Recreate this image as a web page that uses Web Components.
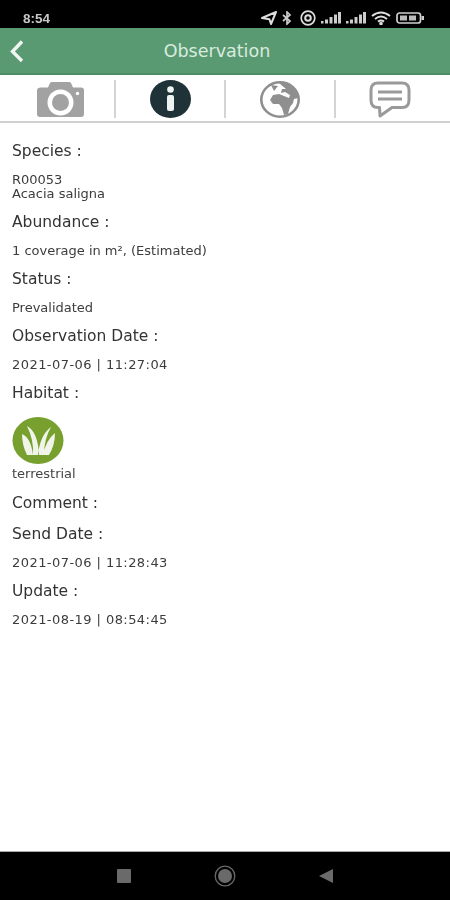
<!DOCTYPE html>
<html>
<head>
<meta charset="utf-8">
<title>Observation</title>
<style>
    html,body{margin:0;height:100%;background:#fff;}
    body{font-family:"DejaVu Sans",Verdana,sans-serif;}
    obs-screen{height:900px;}
</style>
</head>
<body>
<obs-screen>
    <status-bar slot="top" time="8:54"></status-bar>
    <app-bar slot="top" title="Observation"></app-bar>
    <tab-bar slot="top"></tab-bar>

    <obs-field label="Species :"><div>R00053</div><div>Acacia saligna</div></obs-field>
    <obs-field label="Abundance :">1 coverage in m², (Estimated)</obs-field>
    <obs-field label="Status :">Prevalidated</obs-field>
    <obs-field label="Observation Date :" class="date">2021-07-06 | 11:27:04</obs-field>
    <obs-field label="Habitat :" class="no-value"></obs-field>
    <habitat-badge name="terrestrial"></habitat-badge>
    <obs-field label="Comment :" class="no-value comment"></obs-field>
    <obs-field label="Send Date :" class="date">2021-07-06 | 11:28:43</obs-field>
    <obs-field label="Update :" class="date">2021-08-19 | 08:54:45</obs-field>

    <nav-bar slot="bottom"></nav-bar>
</obs-screen>

<script>
class ObsScreen extends HTMLElement{
    constructor(){
        super();
        this.attachShadow({mode:'open'});
        this.shadowRoot.innerHTML = `
            <style>
                :host{display:flex;flex-direction:column;width:450px;overflow:hidden;filter:blur(.6px);}
                main{flex:1;padding:14px 12px 0;display:flex;flex-direction:column;}
            </style>
            <slot name="top"></slot>
            <main><slot></slot></main>
            <slot name="bottom"></slot>
        `;
    }
}

class StatusBar extends HTMLElement{
    constructor(){
        super();
        this.attachShadow({mode:'open'});
        this.shadowRoot.innerHTML = `
            <style>
                :host{display:flex;align-items:center;justify-content:space-between;height:28px;background:#000;color:#c8c8c8;padding:0 26px 0 23px;box-sizing:border-box;}
                span{font:bold 13.500px "Liberation Sans",sans-serif;position:relative;top:4px;}
                .icons{display:flex;align-items:center;gap:5px;position:relative;top:4px;}
                svg{display:block;}
            </style>
            <span>${this.getAttribute('time')}</span>
            <div class="icons">
                <svg width="16" height="14" viewBox="0 0 16 14"><path d="M1 7 15 1 10 13 8.400 8.300z" fill="none" stroke="#ddd" stroke-width="2" stroke-linejoin="round"/></svg>
                <svg width="10" height="14" viewBox="0 0 10 14"><path d="M1 4 8 10 5 13V1L8 4 1 10" fill="none" stroke="#ccc" stroke-width="1.700"/></svg>
                <svg width="16" height="16" viewBox="0 0 16 16" fill="none" stroke="#ddd" style="margin-left:3px"><circle cx="8" cy="8" r="6.800" stroke-width="1.700"/><circle cx="8" cy="8" r="2.800" stroke-width="2"/></svg>
                <svg width="20" height="12" viewBox="0 0 20 12" fill="#ccc"><rect x="0" y="9" width="2.500" height="2.500"/><rect x="4" y="7.500" width="3" height="4"/><rect x="8.500" y="5" width="3" height="6.500"/><rect x="13" y="2.500" width="3" height="9"/><rect x="17" y="0" width="3" height="11.500"/></svg>
                <svg width="20" height="12" viewBox="0 0 20 12" fill="#ccc"><rect x="0" y="9" width="2.500" height="2.500"/><rect x="4" y="7.500" width="3" height="4"/><rect x="8.500" y="5" width="3" height="6.500"/><rect x="13" y="2.500" width="3" height="9"/><rect x="17" y="0" width="3" height="11.500"/></svg>
                <svg width="20" height="14" viewBox="0 0 20 14" fill="none" stroke="#ddd" stroke-width="2"><path d="M1 5Q10-2 19 5"/><path d="M4 8Q10 3 16 8"/><path d="M7 10.600Q10 8.500 13 10.600"/><circle cx="10" cy="12.500" r=".8" fill="#ddd"/></svg>
                <svg width="28" height="12" viewBox="0 0 28 12"><rect x="1" y="1" width="23.500" height="10" rx="2.500" fill="none" stroke="#d0d0d0" stroke-width="1.700"/><rect x="25.500" y="4" width="2.500" height="4" fill="#d0d0d0"/><rect x="4" y="3.500" width="7" height="5" fill="#bbb"/><rect x="13" y="3.500" width="7" height="5" fill="#bbb"/></svg>
            </div>
        `;
    }
}

class AppBar extends HTMLElement{
    constructor(){
        super();
        this.attachShadow({mode:'open'});
        this.shadowRoot.innerHTML = `
            <style>
                :host{display:flex;align-items:center;justify-content:center;position:relative;height:47px;box-sizing:border-box;background:#5a9a72;border-bottom:2px solid #4d8c65;color:#d9ebdf;font-size:17.500px;padding-right:16px;}
                svg{position:absolute;left:9px;top:11px;}
            </style>
            <svg width="16" height="24" viewBox="0 0 16 24"><path d="M13 2.500 3.500 12.500 13 22" fill="none" stroke="#f0f6f2" stroke-width="3.400"/></svg>
            <span>${this.getAttribute('title')}</span>
        `;
    }
}

class TabBar extends HTMLElement{
    constructor(){
        super();
        this.attachShadow({mode:'open'});
        this.shadowRoot.innerHTML = `
            <style>
                :host{display:grid;grid-template-columns:116px 110px 110px 114px;height:48px;box-sizing:border-box;border-bottom:2px solid #d0d0d0;background:#fff;}
                div{display:flex;align-items:center;justify-content:center;border-right:2px solid #d4d4d4;margin:5px 0 3px;}
                div:first-of-type{padding-left:6px;}
                div:last-of-type{border-right:0;padding-right:6px;}
                svg{display:block;}
            </style>
            <div>
                <svg width="47" height="36" viewBox="0 0 47 36"><path d="M4 6.500H11L13 2Q13.500 1 15 1H32Q33.500 1 34 2L36 6.500H44Q47 6.500 47 9.500V33Q47 36 44 36H3Q0 36 0 33V9.500Q0 6.500 4 6.500Z" fill="#a2a2a2"/><circle cx="23.500" cy="21.500" r="13" fill="#fff"/><circle cx="23.500" cy="21.500" r="8.500" fill="#a2a2a2"/><circle cx="40.500" cy="12.500" r="1.700" fill="#fff"/></svg>
            </div>
            <div>
                <svg width="41" height="38" viewBox="0 0 41 38"><ellipse cx="20.500" cy="19" rx="20.500" ry="19" fill="#1f3238"/><circle cx="20.500" cy="9.500" r="3.300" fill="#eef2f2"/><rect x="17" y="15" width="7" height="16" rx="2" fill="#eef2f2"/></svg>
            </div>
            <div>
                <svg width="40" height="37" viewBox="0 0 40 37"><ellipse cx="20" cy="18.500" rx="18.700" ry="17.200" fill="#fff" stroke="#8f8f8f" stroke-width="2.600"/><path d="M19 2C28 0 36 7 38.500 17L34 18 33 22 30 26 28 33 24 34 22 27 19 23 13 23 10 19 13 14 19 13 24 15 29 17 30 14 25 11 21 12 22 8 26 8Z" fill="#8f8f8f"/><path d="M11 4 18 5 14 10Z" fill="#8f8f8f"/></svg>
            </div>
            <div>
                <svg width="42" height="37" viewBox="0 0 42 37"><path d="M9 2H33Q40 2 40 9V19Q40 26.500 33 26.500H23L11 35 10.500 26.500H9Q2 26.500 2 19V9Q2 2 9 2Z" fill="#fff" stroke="#9a9a9a" stroke-width="3" stroke-linejoin="round"/><path d="M9 11H33M9 18H33" stroke="#9a9a9a" stroke-width="3"/></svg>
            </div>
        `;
    }
}

class ObsField extends HTMLElement{
    constructor(){
        super();
        this.attachShadow({mode:'open'});
        this.shadowRoot.innerHTML = `
            <style>
                :host{display:block;}
                .label{font-size:15.500px;line-height:28px;color:#333;}
                .value{font-size:13px;line-height:14px;padding:7.500px 0;color:#3c3c3c;}
                :host(.date) .value{letter-spacing:.44px;}
                :host(.no-value) .value{display:none;}
                :host(.comment){padding-bottom:3px;}
            </style>
            <div class="label">${this.getAttribute('label')}</div>
            <div class="value"><slot></slot></div>
        `;
    }
}

class HabitatBadge extends HTMLElement{
    constructor(){
        super();
        this.attachShadow({mode:'open'});
        this.shadowRoot.innerHTML = `
            <style>
                :host{display:flex;flex-direction:column;align-items:flex-start;padding-top:10px;}
                svg{display:block;}
                span{font-size:13px;line-height:14px;margin-top:3px;margin-bottom:8px;color:#444;}
            </style>
            <svg width="52" height="47" viewBox="0 0 52 47"><ellipse cx="26" cy="23.500" rx="25.500" ry="23.500" fill="#77a02f"/><path d="M10 17Q19 21 21 38H15Q10 28 10 17ZM15 9Q26 15 27 38H21Q22 23 15 9ZM39 10Q28 18 26 38H32Q32 22 39 10ZM43 16Q34 23 31 38H37Q43 28 43 16Z" fill="#f1f4e8"/></svg>
            <span>${this.getAttribute('name')}</span>
        `;
    }
}

class NavBar extends HTMLElement{
    constructor(){
        super();
        this.attachShadow({mode:'open'});
        this.shadowRoot.innerHTML = `
            <style>
                :host{display:grid;grid-template-columns:repeat(3,101px);justify-content:center;align-items:center;height:49px;background:#000;border-top:1px solid #aaa;box-sizing:border-box;}
                div{display:flex;justify-content:center;}
                svg{display:block;}
            </style>
            <div><svg width="16" height="16"><rect x="1" y="1" width="14" height="14" rx="1" fill="#6a6a6a"/></svg></div>
            <div><svg width="22" height="22"><circle cx="11" cy="11" r="9.800" fill="none" stroke="#6a6a6a" stroke-width="1.300"/><circle cx="11" cy="11" r="7" fill="#6a6a6a"/></svg></div>
            <div><svg width="16" height="16"><path d="M1 8 15 1V15Z" fill="#6a6a6a"/></svg></div>
        `;
    }
}

customElements.define('obs-screen', ObsScreen);
customElements.define('status-bar', StatusBar);
customElements.define('app-bar', AppBar);
customElements.define('tab-bar', TabBar);
customElements.define('obs-field', ObsField);
customElements.define('habitat-badge', HabitatBadge);
customElements.define('nav-bar', NavBar);
</script>
</body>
</html>
